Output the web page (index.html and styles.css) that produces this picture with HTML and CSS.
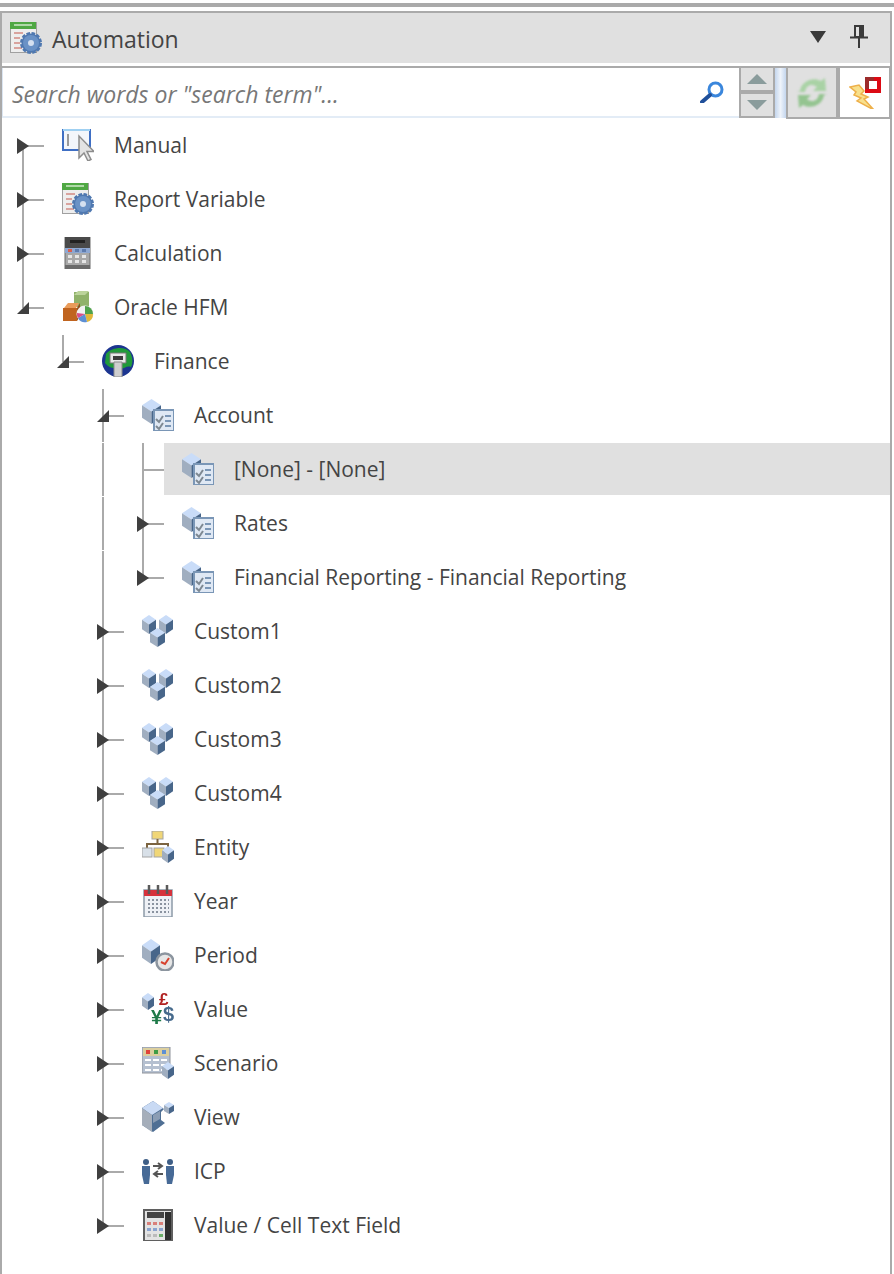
FILE: index.html
```html
<!DOCTYPE html>
<html lang="en">
<head>
<meta charset="utf-8">
<title>Automation</title>
<link rel="stylesheet" href="styles.css">
</head>
<body>
<svg class="defs" width="0" height="0" aria-hidden="true">
  <defs>
    <symbol id="cube" viewBox="0 0 16 16" preserveAspectRatio="none">
      <path d="M8 0 16 4 8 8 0 4Z" fill="#c9dcf8"/>
      <path d="M0 4 8 8V16L0 12Z" fill="#a0aec0"/>
      <path d="M16 4 8 8V16L16 12Z" fill="#48668a"/>
    </symbol>
    <symbol id="gear" viewBox="0 0 32 32">
      <rect x=".5" y=".5" width="26" height="30" fill="#eeeeee" stroke="#a0a0a0"/>
      <rect x="0" y="0" width="26" height="7" fill="#4fa843"/>
      <path d="M4 3h18" stroke="#cfeac8" stroke-width="1.500"/>
      <path d="M4 11h9M4 16h6M4 21h6M4 26h8" stroke="#d28a84" stroke-width="1.500"/>
      <circle cx="21" cy="21" r="9.500" fill="#4f78b0" stroke="#4f78b0" stroke-width="3" stroke-dasharray="3.500 1.500"/>
      <circle cx="21" cy="21" r="8" fill="#6a92c6"/>
      <circle cx="21" cy="21" r="3" fill="#d5e0f0"/>
    </symbol>
    <symbol id="manual" viewBox="0 0 32 32">
      <rect x="1" y="1" width="27" height="20" fill="#f3f6fb" stroke="#3f6fc4" stroke-width="2"/>
      <path d="M1 1h27" stroke="#9fd0f2" stroke-width="2"/>
      <path d="M6 5v12" stroke="#9a9a9a" stroke-width="2"/>
      <path d="M17 7V29l5-5 4 8 3-1.500-4-8h7Z" fill="#e3e3e3" stroke="#8d8d8d" stroke-width="1.500"/>
    </symbol>
    <symbol id="calc" viewBox="0 0 32 32">
      <rect x="3" y="0" width="25" height="32" fill="#a8a8a8" stroke="#6a6a6a"/>
      <rect x="3" y="0" width="25" height="11" fill="#4a4a4a"/>
      <rect x="8" y="3" width="15" height="3" fill="#222"/>
      <rect x="3" y="11" width="25" height="5" fill="#8ea8d2"/>
      <path d="M6 12h4v3H6z" fill="#d9604f"/>
      <path d="M13 12h4v3h-4zM20 12h4v3h-4z" fill="#5e7cae"/>
      <path d="M6 18h4v3H6zM13 18h4v3h-4zM20 18h4v3h-4zM6 23h4v3H6zM13 23h4v3h-4zM20 23h4v3h-4z" fill="#e6e6e6"/>
      <path d="M3 28h25v4H3z" fill="#6a6a6a"/>
    </symbol>
    <symbol id="hfm" viewBox="0 0 32 32">
      <rect x="12" y="1" width="15" height="15" fill="#90b26a"/>
      <path d="M12 4l4-4h11l-4 4Z" fill="#bcd49b"/>
      <path d="M2 17l4-5h11l-3 5Z" fill="#ea9c5a"/>
      <path d="M1 17h14v13H1Z" fill="#c0641f"/>
      <path d="M15 17l3-5v13l-3 5Z" fill="#97501b"/>
      <circle cx="23" cy="23" r="8.500" fill="#f2f2f2"/>
      <path d="M23 23V15a8 8 0 0 1 8 8Z" fill="#4fa24a"/>
      <path d="M23 23h8a8 8 0 0 1-6 8Z" fill="#e1b83b"/>
      <path d="M23 23l2 8a8 8 0 0 1-9-4Z" fill="#5d8fd4"/>
      <path d="M23 23l-7 4a8 8 0 0 1-1-5Z" fill="#d84e87"/>
    </symbol>
    <symbol id="globe" viewBox="0 0 32 32">
      <circle cx="16" cy="16" r="16" fill="#1c3590"/>
      <path d="M4 9C10 2 23 1 28 7c3 6 3 11 1 15-5-2-7 3-11 1C12 24 7 23 3 18Z" fill="#209a3a"/>
      <path d="M8 8h16v10H8z" fill="#e8e8e8" stroke="#777"/>
      <path d="M11 11h10v4H11z" fill="#3c3c3c"/>
      <path d="M12 17h8v15h-8z" fill="#cfcfcf" stroke="#8b8b8b"/>
    </symbol>
    <symbol id="cubelist" viewBox="0 0 32 32">
      <use href="#cube" x="0" y="0" width="19" height="25"/>
      <rect x="12" y="11" width="20" height="21" fill="#dfe8f4" stroke="#7a96b6" stroke-width="2"/>
      <path d="M14 20l3 3 4-6M14 27l3 3 4-6" fill="none" stroke="#7d8892" stroke-width="2"/>
      <path d="M23 17h6M23 22h6M23 27h6" stroke="#7a96b6" stroke-width="2"/>
    </symbol>
    <symbol id="cubes" viewBox="0 0 32 32">
      <use href="#cube" x="0" y="0" width="14" height="19"/>
      <use href="#cube" x="17" y="0" width="14" height="19"/>
      <use href="#cube" x="8" y="13" width="15" height="19"/>
    </symbol>
    <symbol id="entity" viewBox="0 0 32 32">
      <rect x="10" y="0" width="11" height="8" fill="#f0d677" stroke="#a4a4a4"/>
      <path d="M15.500 8v5M5 18v-5h21v5" fill="none" stroke="#7c6440" stroke-width="2"/>
      <rect x="0" y="17" width="10" height="9" fill="#d8e0e8" stroke="#a4a4a4"/>
      <rect x="12" y="17" width="10" height="9" fill="#f0d677" stroke="#a4a4a4"/>
      <use href="#cube" x="20" y="15" width="12" height="17"/>
    </symbol>
    <symbol id="year" viewBox="0 0 32 32">
      <rect x="2" y="5" width="28" height="27" fill="#eef1f6" stroke="#8d9aa8" stroke-width="1.500"/>
      <rect x="2" y="5" width="28" height="6" fill="#d6323c"/>
      <path d="M7 0v9M16 0v9M25 0v9" stroke="#5a5a5a" stroke-width="2.500"/>
      <path d="M6 15h21M6 19h21M6 23h21M6 27h21" stroke="#8a93a0" stroke-width="2" stroke-dasharray="2 2"/>
    </symbol>
    <symbol id="period" viewBox="0 0 32 32">
      <use href="#cube" x="0" y="0" width="18" height="25"/>
      <circle cx="23" cy="23" r="8.500" fill="#e6e6e6" stroke="#8c959f" stroke-width="2.500"/>
      <path d="M19 23l4 2 4-6" fill="none" stroke="#d7432f" stroke-width="2"/>
    </symbol>
    <symbol id="value" viewBox="0 0 32 32">
      <use href="#cube" x="0" y="0" width="12" height="17"/>
      <text class="cur cur-pound" x="17" y="12">£</text>
      <text class="cur cur-yen" x="9" y="31">¥</text>
      <text class="cur cur-dollar" x="21" y="28">$</text>
    </symbol>
    <symbol id="scenario" viewBox="0 0 32 32">
      <rect x="0" y="0" width="28" height="26" fill="#b5c0d0" stroke="#8f949c"/>
      <rect x="1" y="1" width="26" height="8" fill="#dccf9e"/>
      <path d="M4 3h4v4H4z" fill="#e0433a"/><path d="M12 3h4v4h-4z" fill="#3f9c45"/><path d="M20 3h4v4h-4z" fill="#5d8fd4"/>
      <path d="M3 13h6M11 13h6M19 13h6M3 18h6M11 18h6M19 18h6M3 23h6M11 23h6M19 23h6" stroke="#fff" stroke-width="2"/>
      <use href="#cube" x="20" y="15" width="12" height="17"/>
    </symbol>
    <symbol id="view" viewBox="0 0 32 32">
      <path d="M11 0 22 8 19 11V19L23 22 11 31 0 24V7Z" fill="#4f6f94"/>
      <path d="M11 0 21 7 10 14 0 7Z" fill="#c9daf4"/>
      <path d="M0 7 10 14V31L0 24Z" fill="#a5aeba"/>
      <path d="M11 14 18 10V18L11 22Z" fill="#8b9db4"/>
      <use href="#cube" x="22" y="1" width="10" height="12"/>
    </symbol>
    <symbol id="icp" viewBox="0 0 32 32">
      <circle cx="4" cy="7" r="3" fill="#3e5e86"/><circle cx="28" cy="7" r="3" fill="#3e5e86"/>
      <path d="M0 11h8v9l-1 9H2L0 20Z" fill="#476a96"/>
      <path d="M24 11h8v9l-2 9h-5l-1-9Z" fill="#476a96"/>
      <path d="M11 11h9M16 8l4 3-4 3M21 19h-9M16 16l-4 3 4 3" fill="none" stroke="#555" stroke-width="2"/>
    </symbol>
    <symbol id="cellcalc" viewBox="0 0 32 32">
      <rect x="2" y="1" width="28" height="31" fill="#e3e3e3" stroke="#5f5f5f" stroke-width="2"/>
      <rect x="5" y="3" width="17" height="6" fill="#444"/>
      <rect x="23" y="3" width="6" height="28" fill="#2f2f2f"/>
      <path d="M5 13h4v3H5zM11 13h4v3h-4zM17 13h4v3h-4z" fill="#d9807a"/>
      <path d="M5 19h4v3H5zM11 19h4v3h-4zM17 19h4v3h-4z" fill="#8aa4d0"/>
      <path d="M5 25h4v3H5zM11 25h4v3h-4z" fill="#bbb"/><path d="M17 25h4v3h-4z" fill="#69ad67"/>
    </symbol>
    <symbol id="arrow-r" viewBox="0 0 12 16"><path d="M0 0 12 8 0 16Z"/></symbol>
    <symbol id="arrow-d" viewBox="0 0 12 12"><path d="M12 0V12H0Z"/></symbol>
  </defs>
</svg>

<div class="topline"></div>
<main class="panel">
  <header class="head">
    <svg class="head-icon"><use href="#gear"/></svg>
    <span class="head-title">Automation</span>
    <svg class="head-drop" viewBox="0 0 16 12"><path d="M0 0H16L8 12Z"/></svg>
    <svg class="head-pin" viewBox="0 0 18 23"><path d="M5 1h8v11H5z" fill="none" stroke="#3a3a3a" stroke-width="2"/><path d="M9 1h4v11H9z" fill="#3a3a3a"/><path d="M0 12.500h18M9 12.500V23" stroke="#3a3a3a" stroke-width="2"/></svg>
  </header>
  <div class="toolbar">
    <div class="search">
      <span class="search-text">Search words or "search term"...</span>
      <svg class="search-icon" viewBox="0 0 24 22"><circle cx="15.500" cy="8.500" r="6.500" fill="none" stroke="#3a86dc" stroke-width="3"/><path d="M10 14 2 21" stroke="#1f4f9a" stroke-width="4" stroke-linecap="round"/></svg>
    </div>
    <div class="spin">
      <button class="spin-btn" type="button" aria-label="Up"><svg viewBox="0 0 20 10"><path d="M10 0 20 10H0Z"/></svg></button>
      <button class="spin-btn" type="button" aria-label="Down"><svg viewBox="0 0 20 10"><path d="M0 0H20L10 10Z"/></svg></button>
    </div>
    <div class="tool-gap"></div>
    <button class="tool tool-on" type="button" aria-label="Refresh">
      <svg viewBox="0 0 32 32"><path d="M4 14C5 5 16-1 25 4l4-3 1 13H17l4-4C16 6 10 8 9 15H1Z" fill="#a9d2a5"/><path d="M28 18C27 27 16 33 7 28l-4 3-1-13H15l-4 4c5 4 11 2 12-5h8Z" fill="#94c490"/></svg>
    </button>
    <button class="tool tool-off" type="button" aria-label="Alert">
      <svg viewBox="0 0 32 32"><path d="M1 10 10 8 15 14 12 17 19 20 15 22 25 33 8 24 12 21 5 18 7 15Z" fill="#f8e08c" stroke="#eeb04a" stroke-width="1.500"/><rect x="16" y="0" width="16" height="16" fill="#dc0a14"/><path d="M16 0h9v4h-5v8h-4z" fill="#9c2b2b"/><rect x="20" y="4" width="8" height="8" fill="#fff"/></svg>
    </button>
  </div>

  <ul class="tree">
    <li class="row"><span class="cell ln-down arr"><svg class="tw"><use href="#arrow-r"/></svg></span><svg class="ico"><use href="#manual"/></svg><span class="lbl">Manual</span></li>
    <li class="row"><span class="cell ln-full arr"><svg class="tw"><use href="#arrow-r"/></svg></span><svg class="ico"><use href="#gear"/></svg><span class="lbl">Report Variable</span></li>
    <li class="row"><span class="cell ln-full arr"><svg class="tw"><use href="#arrow-r"/></svg></span><svg class="ico"><use href="#calc"/></svg><span class="lbl">Calculation</span></li>
    <li class="row"><span class="cell ln-up arr"><svg class="tw-d"><use href="#arrow-d"/></svg></span><svg class="ico"><use href="#hfm"/></svg><span class="lbl">Oracle HFM</span></li>
    <li class="row"><span class="cell"></span><span class="cell ln-up ln-start arr"><svg class="tw-d"><use href="#arrow-d"/></svg></span><svg class="ico"><use href="#globe"/></svg><span class="lbl">Finance</span></li>
    <li class="row"><span class="cell"></span><span class="cell"></span><span class="cell ln-gap arr"><svg class="tw-d"><use href="#arrow-d"/></svg></span><svg class="ico"><use href="#cubelist"/></svg><span class="lbl">Account</span></li>
    <li class="row"><span class="cell"></span><span class="cell"></span><span class="cell ln-gap"></span><span class="cell ln-gap arr"></span><span class="sel"><svg class="ico"><use href="#cubelist"/></svg><span class="lbl">[None] - [None]</span></span></li>
    <li class="row"><span class="cell"></span><span class="cell"></span><span class="cell ln-gap"></span><span class="cell ln-full arr"><svg class="tw"><use href="#arrow-r"/></svg></span><svg class="ico"><use href="#cubelist"/></svg><span class="lbl">Rates</span></li>
    <li class="row"><span class="cell"></span><span class="cell"></span><span class="cell ln-gap"></span><span class="cell ln-up arr"><svg class="tw"><use href="#arrow-r"/></svg></span><svg class="ico"><use href="#cubelist"/></svg><span class="lbl">Financial Reporting - Financial Reporting</span></li>
    <li class="row"><span class="cell"></span><span class="cell"></span><span class="cell ln-full arr"><svg class="tw"><use href="#arrow-r"/></svg></span><svg class="ico"><use href="#cubes"/></svg><span class="lbl">Custom1</span></li>
    <li class="row"><span class="cell"></span><span class="cell"></span><span class="cell ln-full arr"><svg class="tw"><use href="#arrow-r"/></svg></span><svg class="ico"><use href="#cubes"/></svg><span class="lbl">Custom2</span></li>
    <li class="row"><span class="cell"></span><span class="cell"></span><span class="cell ln-full arr"><svg class="tw"><use href="#arrow-r"/></svg></span><svg class="ico"><use href="#cubes"/></svg><span class="lbl">Custom3</span></li>
    <li class="row"><span class="cell"></span><span class="cell"></span><span class="cell ln-full arr"><svg class="tw"><use href="#arrow-r"/></svg></span><svg class="ico"><use href="#cubes"/></svg><span class="lbl">Custom4</span></li>
    <li class="row"><span class="cell"></span><span class="cell"></span><span class="cell ln-full arr"><svg class="tw"><use href="#arrow-r"/></svg></span><svg class="ico"><use href="#entity"/></svg><span class="lbl">Entity</span></li>
    <li class="row"><span class="cell"></span><span class="cell"></span><span class="cell ln-full arr"><svg class="tw"><use href="#arrow-r"/></svg></span><svg class="ico"><use href="#year"/></svg><span class="lbl">Year</span></li>
    <li class="row"><span class="cell"></span><span class="cell"></span><span class="cell ln-full arr"><svg class="tw"><use href="#arrow-r"/></svg></span><svg class="ico"><use href="#period"/></svg><span class="lbl">Period</span></li>
    <li class="row"><span class="cell"></span><span class="cell"></span><span class="cell ln-full arr"><svg class="tw"><use href="#arrow-r"/></svg></span><svg class="ico"><use href="#value"/></svg><span class="lbl">Value</span></li>
    <li class="row"><span class="cell"></span><span class="cell"></span><span class="cell ln-full arr"><svg class="tw"><use href="#arrow-r"/></svg></span><svg class="ico"><use href="#scenario"/></svg><span class="lbl">Scenario</span></li>
    <li class="row"><span class="cell"></span><span class="cell"></span><span class="cell ln-full arr"><svg class="tw"><use href="#arrow-r"/></svg></span><svg class="ico"><use href="#view"/></svg><span class="lbl">View</span></li>
    <li class="row"><span class="cell"></span><span class="cell"></span><span class="cell ln-full arr"><svg class="tw"><use href="#arrow-r"/></svg></span><svg class="ico"><use href="#icp"/></svg><span class="lbl">ICP</span></li>
    <li class="row"><span class="cell"></span><span class="cell"></span><span class="cell ln-up arr"><svg class="tw"><use href="#arrow-r"/></svg></span><svg class="ico"><use href="#cellcalc"/></svg><span class="lbl">Value / Cell Text Field</span></li>
  </ul>
</main>
</body>
</html>
```
FILE: styles.css
```css
* { box-sizing: border-box; }
html, body { margin: 0; padding: 0; background: #fff; }
body {
  width: 894px;
  height: 1274px;
  overflow: hidden;
  font-family: "Open Sans", "Noto Sans", sans-serif;
  color: #444;
  padding-top: 3px;
}
.defs { display: block; height: 0; width: 0; }
.cur { font-family: "Liberation Sans", sans-serif; font-weight: 700; }
.cur-pound { fill: #b02020; font-size: 17px; }
.cur-yen { fill: #1e7a48; font-size: 20px; }
.cur-dollar { fill: #466a8c; font-size: 20px; }

.topline { height: 4px; background: #aaa; }

.panel {
  margin-top: 4px;
  height: 1263px;
  border-left: 2px solid #aaa;
  border-right: 2px solid #aaa;
  border-top: 2px solid #aaa;
  width: 892px;
}

.head {
  height: 50px;
  background: #e0e0e0;
  display: flex;
  align-items: center;
  padding-left: 8px;
}
.head-icon { width: 32px; height: 32px; filter: blur(.7px); }
.head-title { font-size: 23px; margin-left: 10px; color: #444; position: relative; top: 1px; }
.head-drop { width: 16px; height: 12px; fill: #3a3a3a; margin-left: auto; margin-top: -2px; }
.head-pin { width: 18px; height: 23px; margin-left: 24px; margin-right: 22px; margin-top: -3px; }

.toolbar {
  margin-top: 3px;
  height: 53px;
  display: flex;
  align-items: flex-start;
  border-top: 2px solid #aaa;
  margin-bottom: -1px;
}
.search {
  flex: 1;
  height: 50px;
  display: flex;
  align-items: center;
  padding: 0 15px 0 9px;
  border-bottom: 2px solid #e3ecf6;
  border-left: 1px solid #dbe5f1;
}
.search-text { font-size: 23px; font-style: italic; color: #777; flex: 1; padding-top: 4px; }
.search-icon { width: 24px; height: 22px; }
.spin {
  width: 36px;
  height: 50px;
  display: flex;
  flex-direction: column;
  gap: 4px;
  border: 2px solid #aaa;
  border-top: 0;
  background: #aaa;
}
.spin-btn {
  flex: 1;
  padding: 0;
  border: 0;
  background: #e0e0e0;
  display: flex;
  align-items: center;
  justify-content: center;
}
.spin-btn svg { width: 20px; height: 10px; fill: #8a9c9c; }
.tool-gap {
  width: 11px;
  height: 50px;
  background: linear-gradient(90deg, #c4d6ee, #eef3fa 50%, #c4d6ee);
}
.tool {
  height: 51px;
  padding: 0;
  display: flex;
  align-items: center;
  justify-content: center;
}
.tool svg { width: 32px; height: 32px; }
.tool-on {
  width: 54px;
  background: #e0e0e0;
  border: solid #aaa;
  border-width: 0 4px 2px 2px;
}
.tool-on svg { filter: blur(1px); }
.tool-off {
  width: 50px;
  background: #fff;
  border: solid #aaa;
  border-width: 0 1px 2px 0;
}
.tool-off svg { filter: blur(.7px); }

.tree { list-style: none; margin: 0; padding: 0 0 0 2px; }
.row { height: 54px; display: flex; align-items: center; }
.cell { width: 40px; height: 54px; flex: none; position: relative; }
.arr::after {
  content: "";
  position: absolute;
  left: 20px; right: 0; top: 27px;
  height: 2px;
  background: #aaa;
}
.ln-full::before, .ln-down::before, .ln-up::before, .ln-gap::before {
  content: "";
  position: absolute;
  left: 18px;
  width: 2px;
  background: #aaa;
}
.ln-full::before { top: 0; bottom: 0; }
.ln-down::before { top: 27px; bottom: 0; }
.ln-up::before { top: 0; height: 28px; }
.ln-start::before { top: 1px; height: 27px; }
.ln-gap::before { top: 1px; bottom: 0; }
.tw { position: absolute; left: 13px; top: 20px; width: 12px; height: 16px; fill: #3f3f3f; z-index: 1; }
.tw-d { position: absolute; left: 13px; top: 22px; width: 12px; height: 12px; fill: #3f3f3f; z-index: 1; }
.ico { width: 32px; height: 32px; margin-left: 18px; margin-right: 20px; flex: none; filter: blur(.7px); }
.lbl { font-size: 21px; white-space: nowrap; color: #444; }
.sel {
  flex: 1;
  height: 52px;
  display: flex;
  align-items: center;
  background: #e0e0e0;
}
```
